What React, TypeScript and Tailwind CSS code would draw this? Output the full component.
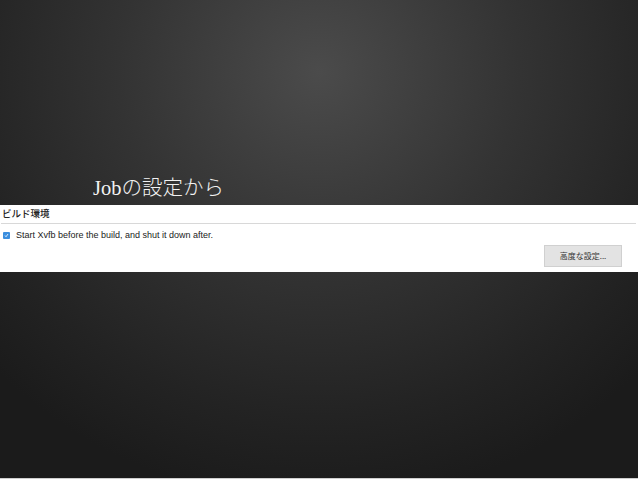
export default function App() {
  return (
    <div className="h-[479px] w-full flex flex-col bg-[radial-gradient(ellipse_70%_90%_at_50%_15%,#4b4b4b_0%,#333333_45%,#232323_80%,#1b1b1b_100%)] font-['Liberation_Sans','Noto_Sans_CJK_JP',sans-serif]">
      <div className="h-[205px] flex items-end pl-[93px] pb-[4px]">
        <h1 className="text-[20.5px] leading-[26px] text-[#f2f2f2] font-['Liberation_Serif','Noto_Sans_CJK_JP',serif] font-light">
          Jobの設定から
        </h1>
      </div>

      <div className="h-[67px] bg-white">
        <div className="pt-[1px] pl-[2px] text-[9.5px] leading-[14px] font-medium text-[#222] font-['Noto_Sans_CJK_JP',sans-serif]">
          ビルド環境
        </div>
        <div className="mt-[3px] ml-[1px] mr-[2px] h-px bg-[#d8d8d8]" />
        <div className="flex items-center gap-[6px] pl-[3px] mt-[6px]">
          <span className="w-[7px] h-[7px] rounded-[1px] bg-[#3b8ede] flex items-center justify-center">
            <svg width="5" height="5" viewBox="0 0 10 10">
              <path d="M2 5 L4 7.5 L8 2" stroke="white" strokeWidth="1.6" fill="none" />
            </svg>
          </span>
          <span className="text-[9px] leading-[10px] text-[#222]">
            Start Xvfb before the build, and shut it down after.
          </span>
        </div>
        <div className="flex justify-end pr-[16px] mt-[5px]">
          <button className="w-[78px] h-[22px] bg-[#e3e3e3] border border-[#d0d0d0] text-[8px] text-[#333] font-['Noto_Sans_CJK_JP',sans-serif]">
            高度な設定...
          </button>
        </div>
      </div>

      <div className="flex-1" />
      <div className="h-px bg-[#cfcfcf]" />
    </div>
  );
}
